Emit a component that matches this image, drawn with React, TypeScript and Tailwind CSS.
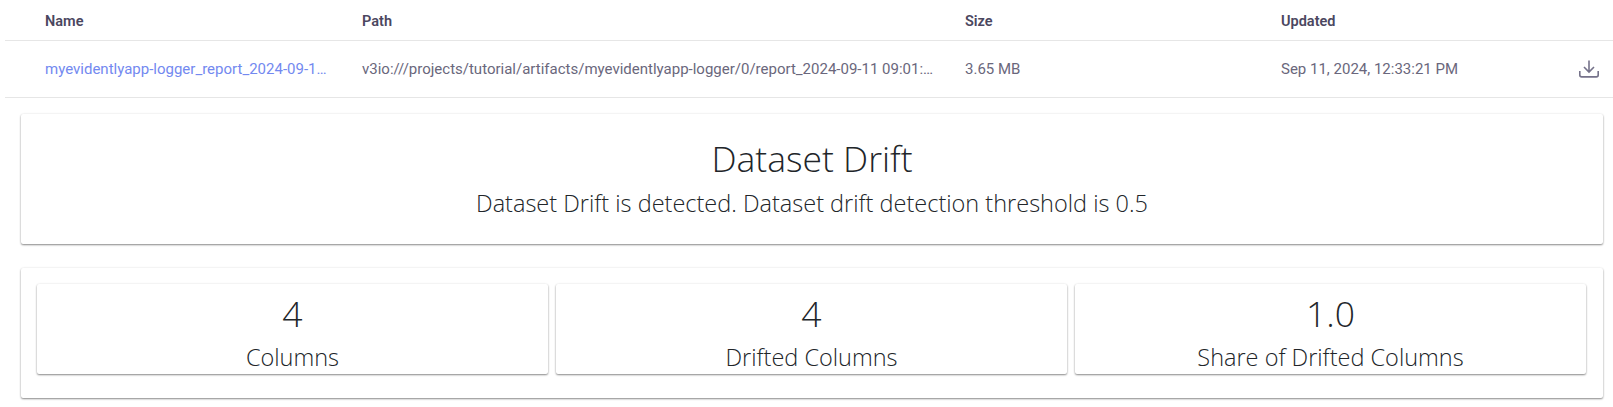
import React from "react";

const cardShadow = "shadow-[0_1px_2px_rgba(0,0,0,0.45),0_0_3px_rgba(0,0,0,0.06)]";

function DownloadIcon() {
  return (
    <svg width="20" height="18" viewBox="0 0 20 18" fill="none" stroke="#75728a" strokeWidth="1.6">
      <path d="M10 0.5V11.5M5 7L10 12L15 7" />
      <path d="M0.8 11V15C0.8 16.2 1.5 16.9 2.7 16.9H17.3C18.5 16.9 19.2 16.2 19.2 15V11" />
    </svg>
  );
}

function Stat({ value, label }: { value: string; label: string }) {
  return (
    <div className={`flex-1 h-[90px] bg-white rounded-[2px] text-center text-[#212529] font-light ${cardShadow}`}>
      <div className="text-[35.5px] leading-[42px] pt-[8px]">{value}</div>
      <div className="text-[23.5px] leading-[26px] mt-[10px]">{label}</div>
    </div>
  );
}

export default function App() {
  return (
    <div className="w-[1613px] h-[407px] overflow-hidden bg-white font-['Open_Sans',sans-serif]">
      <div className="ml-[5px] font-['Roboto',sans-serif]">
        <div className="h-[41px] pt-[3px] border-b border-[#e6e6e6] flex items-center text-[14.5px] font-semibold text-[#4b4760]">
          <div className="w-[327px] pl-[40px] shrink-0">Name</div>
          <div className="w-[613px] pl-[30px] shrink-0">Path</div>
          <div className="w-[296px] shrink-0 pl-[20px]">Size</div>
          <div className="pl-[40px]">Updated</div>
        </div>
        <div className="h-[57px] border-b border-[#e6e6e6] flex items-center text-[15px] text-[#6a677c] whitespace-nowrap">
          <div className="w-[327px] pl-[40px] shrink-0 text-[#7389f0]">myevidentlyapp-logger_report_2024-09-1…</div>
          <div className="w-[613px] pl-[30px] shrink-0">v3io:///projects/tutorial/artifacts/myevidentlyapp-logger/0/report_2024-09-11 09:01:…</div>
          <div className="w-[296px] shrink-0 pl-[20px]">3.65 MB</div>
          <div className="pl-[40px] flex-1">Sep 11, 2024, 12:33:21 PM</div>
          <div className="mr-[14px] flex"><DownloadIcon /></div>
        </div>
      </div>
      <div className="mx-[21px] mt-[16px] flex flex-col gap-[24px]">
        <div className={`w-[1582px] h-[130px] bg-white rounded-[2px] text-center text-[#212529] font-light ${cardShadow}`}>
          <div className="text-[35.5px] leading-[42px] pt-[23px]">Dataset Drift</div>
          <div className="text-[23.5px] leading-[26px] mt-[11px]">Dataset Drift is detected. Dataset drift detection threshold is 0.5</div>
        </div>
        <div className={`w-[1582px] h-[130px] bg-white rounded-[2px] pl-[16px] pr-[17px] pt-[16px] flex gap-[8px] ${cardShadow}`}>
          <Stat value="4" label="Columns" />
          <Stat value="4" label="Drifted Columns" />
          <Stat value="1.0" label="Share of Drifted Columns" />
        </div>
      </div>
    </div>
  );
}
